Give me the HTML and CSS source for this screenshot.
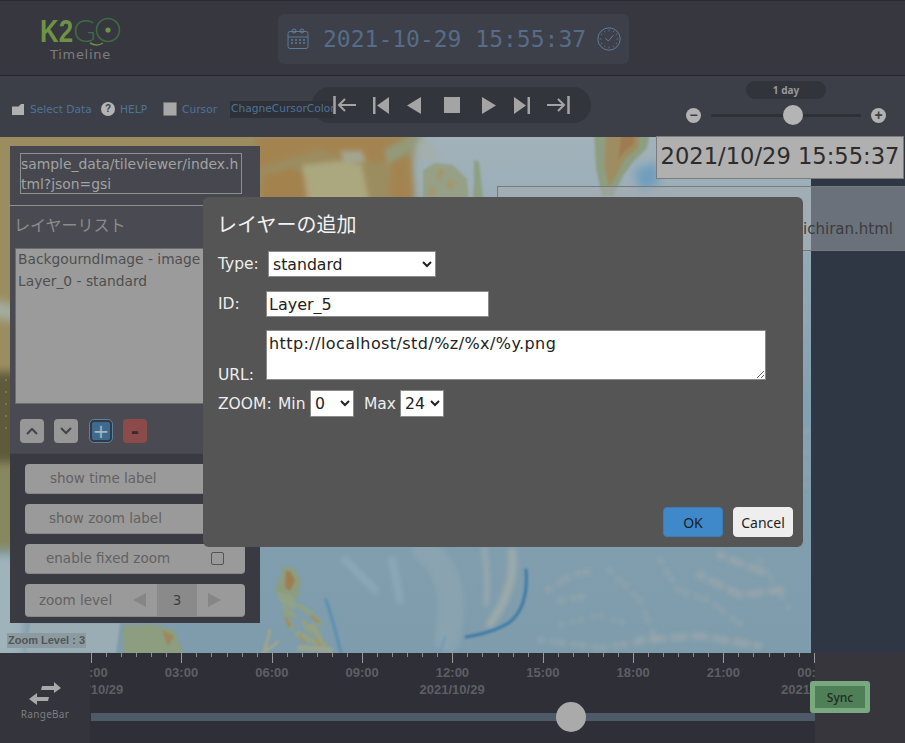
FILE: index.html
```html
<!DOCTYPE html>
<html lang="ja">
<head>
<meta charset="utf-8">
<title>K2GO Timeline</title>
<link rel="stylesheet" href="styles.css">
</head>
<body>
<header class="header">
  <div class="logo">
    <svg class="logo-svg" width="100" height="30" viewBox="0 0 100 30">
      <text class="logo-k2" x="0" y="23" textLength="33" lengthAdjust="spacingAndGlyphs">K2</text>
      <text class="logo-go" x="33" y="23" textLength="23" lengthAdjust="spacingAndGlyphs">G</text>
      <circle cx="68" cy="11" r="11.5" fill="none" stroke="#3f6b45" stroke-width="1.500"/>
      <circle cx="68" cy="11" r="2.600" fill="#6d9345"/>
      <path d="M50 24q7 4 13 0" fill="none" stroke="#6d9345" stroke-width="1.500"/>
    </svg>
    <div class="logo-sub">Timeline</div>
  </div>
  <div class="clock">
    <svg width="22" height="22" viewBox="0 0 22 22" fill="none" stroke="#5f7b9a" stroke-width="1">
      <rect x="1" y="3.500" width="20" height="17" rx="2"/>
      <path d="M1 9h20"/>
      <circle cx="7" cy="3" r="2"/><circle cx="15" cy="3" r="2"/>
      <path d="M4 12h2M8 12h2M12 12h2M16 12h2M4 15h2M8 15h2M12 15h2M16 15h2" stroke-width="1.400"/>
    </svg>
    <span class="clock-text">2021-10-29 15:55:37</span>
    <svg width="24" height="24" viewBox="0 0 24 24" fill="none" stroke="#5f7b9a">
      <circle cx="12" cy="12" r="11.200"/>
      <path d="M12 2.500v2M12 19.500v2M2.500 12h2M19.500 12h2M7 3.800l.8 1.300M17 3.800l-.8 1.300M7 20.200l.8-1.300M17 20.200l-.8-1.300M3.800 7l1.300.8M3.800 17l1.300-.8M20.200 7l-1.300.8M20.200 17l-1.300-.8" stroke-width=".8"/>
      <path d="M8.500 11.500l3 2.500 5-6" stroke-width="1"/>
    </svg>
  </div>
</header>

<nav class="toolbar">
  <div class="player">
    <svg width="23" height="18" viewBox="0 0 23 18" fill="none" stroke="#a4a4a4" stroke-width="2"><path d="M1.500 0v18" stroke-width="2.500"/><path d="M23 9H6M12 3L6 9l6 6"/></svg>
    <svg width="16" height="17" viewBox="0 0 16 17" fill="#a4a4a4"><rect width="2.500" height="17"/><path d="M16 0v17L4 8.500z"/></svg>
    <svg class="pi-prev" width="14" height="17" viewBox="0 0 14 17" fill="#a4a4a4"><path d="M14 0v17L0 8.500z"/></svg>
    <svg class="pi-stop" width="16" height="16" viewBox="0 0 16 16" fill="#a4a4a4"><rect width="16" height="16"/></svg>
    <svg class="pi-play" width="14" height="17" viewBox="0 0 14 17" fill="#a4a4a4"><path d="M0 0v17l14-8.500z"/></svg>
    <svg class="pi-next" width="16" height="17" viewBox="0 0 16 17" fill="#a4a4a4"><rect x="13.500" width="2.500" height="17"/><path d="M0 0v17l12-8.500z"/></svg>
    <svg width="23" height="18" viewBox="0 0 23 18" fill="none" stroke="#a4a4a4" stroke-width="2"><path d="M21.500 0v18" stroke-width="2.500"/><path d="M0 9h17M11 3l6 6-6 6"/></svg>
  </div>
  <div class="tools">
    <svg class="tool-icon" width="12" height="11" viewBox="0 0 12 11"><path d="M0 2.500h6.500L9 0h3v11H0z" fill="#b0b0b0"/></svg>
    <span class="tool-label tool-select">Select Data</span>
    <span class="help">?</span>
    <span class="tool-label tool-help">HELP</span>
    <span class="tool-check"></span>
    <span class="tool-label tool-cursor">Cursor</span>
    <span class="tool-color">ChagneCursorColor</span>
  </div>
  <div class="range">
    <div class="range-label">1 day</div>
    <div class="range-row">
      <span class="range-btn">−</span>
      <span class="range-track"><span class="range-thumb"></span></span>
      <span class="range-btn">+</span>
    </div>
  </div>
</nav>

<main class="main">
  <div class="map">
    <svg class="map-svg" width="811" height="516" viewBox="0 137 811 516" preserveAspectRatio="none">
      <defs>
        <linearGradient id="sea" x1="0" y1="0" x2="0" y2="1">
          <stop offset="0" stop-color="#a2b2ba"/>
          <stop offset=".5" stop-color="#84a1b1"/>
          <stop offset="1" stop-color="#7e9cac"/>
        </linearGradient>
        <filter id="b1" x="-20%" y="-20%" width="140%" height="140%" color-interpolation-filters="sRGB"><feGaussianBlur stdDeviation="1.200"/></filter>
        <filter id="b2" x="-20%" y="-20%" width="140%" height="140%" color-interpolation-filters="sRGB"><feGaussianBlur stdDeviation="2.500"/></filter>
        <filter id="b5" x="-20%" y="-20%" width="140%" height="140%" color-interpolation-filters="sRGB"><feGaussianBlur stdDeviation="5"/></filter>
      </defs>
      <rect x="0" y="137" width="811" height="516" fill="url(#sea)"/>

      <!-- west landmass, mostly behind the panel -->
      <g filter="url(#b5)">
        <path d="M-20 120H420L412 165 415 210 380 440 200 560 90 510 20 530-20 560z" fill="#9c8d60"/>
        <path d="M-20 296L26 308 18 322-20 316z" fill="#a2ad9f"/>
        <path d="M-20 372H24V462H-20z" fill="#5e5a3b"/>
        <path d="M-20 462H24V550H-20z" fill="#87885f"/>
        <path d="M-20 556H24V670H-20z" fill="#9fb3ba"/>
      </g>
      <g filter="url(#b2)" fill-opacity=".85">
        <path d="M255 137h165l-16 14-24 12-30-2-30-12-40 12-25 10z" fill="#a4834f"/>
        <path d="M262 176l30-8 18 10 2 25h-50z" fill="#a4804b"/>
        <path d="M302 165l36-4 24 4 8 40h-62z" fill="#aeab84"/>
        <path d="M340 151l22 0 4 11-22 1z" fill="#a3ab9c"/>
        <path d="M392 162l18-6 4 49h-26z" fill="#a4834f"/>
        <path d="M384 150l30-16 10 6-20 14-16 10z" fill="#919f80"/>
        <path d="M416 140h14l10 20-18 2z" fill="#a4aea9"/>
      </g>
      <!-- islands and peninsula along the top -->
      <g filter="url(#b1)" fill-opacity=".85">
        <path d="M423 170l12-7 18 2 14 14 2 26h-46z" fill="#949e7c"/>
        <path d="M438 168l6 2-2 10-6-2zM448 178l8 4-4 8-6-3zM430 186l6 2-2 8-6-1z" fill="#a5976c"/>
        <path d="M474 160l5 2 5 45-12 1 2-24z" fill="#8b9d78"/>
        <path d="M594 130h56l-3 18-14 14-10 14-10 20h-11l-6-28z" fill="#8b9a76"/>
        <path d="M606 130h34l-2 18-14 12-9 18-6 10-4-20z" fill="#a28b5d"/>
        <path d="M622 130h13l-1 14-10 8-6 8z" fill="#a07a4c"/>
      </g>
      <path d="M634 170l22-8 4 20-18 12z" fill="#6f9dbe" filter="url(#b5)"/>

      <!-- sea floor relief -->
      <g filter="url(#b2)" fill="none" stroke-linecap="round" stroke-opacity=".7">
        <path d="M425 550c26 20 30 50 22 90" stroke="#94a9b3" stroke-width="26" stroke-opacity=".5"/>
        <path d="M484 548q5 30 2 56" stroke="#a2afb1" stroke-width="5"/>
        <path d="M512 552q4 36-22 72" stroke="#a9b0aa" stroke-width="8"/>
        <path d="M392 560l8 40M345 560l30 30" stroke="#8facbb" stroke-width="8"/>
      </g>
      <g filter="url(#b2)" fill="none" stroke="#a5acab" stroke-linecap="round" stroke-dasharray="2 11 1 7" stroke-opacity=".55">
        <path d="M548 590l22-14 24-6M560 600l30-4M540 640l60 8 40-6" stroke-width="6"/>
        <path d="M610 570l30 30 16 40M660 560l18 30 30 10 40 30" stroke-width="5"/>
        <path d="M700 575l40 20 50-6M720 555l50 20M640 640l60-4 60 10" stroke-width="8"/>
        <path d="M760 560l30 50M560 625l40-10 30 10" stroke-width="4"/>
        <path d="M804 300v40M806 430v60" stroke-width="4"/>
      </g>
      <path d="M6 380v60M14 400v40" fill="none" stroke="#bcb99c" stroke-width="1.500" stroke-linecap="round" stroke-dasharray="0 12" stroke-opacity=".7"/>

      <!-- Philippines -->
      <g filter="url(#b1)" fill-opacity=".85">
        <path d="M284 566l10 2 7 12-2 14-6 8-10-2-8-10z" fill="#8e9e77"/>
        <path d="M286 571l5 1 4 9-5 10-5-4z" fill="#a2784a"/>
        <path d="M278 592l14 4 6 10-6 4-12-8z" fill="#93a384"/>
      </g>
      <g filter="url(#b1)" fill="none" stroke-linecap="round" stroke-opacity=".8">
        <path d="M284 608l10 8M300 606l12 8 8 10M286 616l6 12M304 622l6 10" stroke="#93a279" stroke-width="5"/>
        <path d="M286 618l4 8M312 616l6 6" stroke="#a48858" stroke-width="3"/>
        <path d="M298 634l12 6 14 4M312 626l8 12" stroke="#9ba37a" stroke-width="6"/>
        <path d="M300 636l4 6M316 640l4 6" stroke="#a5925e" stroke-width="3"/>
        <path d="M278 642l-16 12M270 630l-6 22" stroke="#a6a885" stroke-width="3"/>
        <path d="M300 648l30 2" stroke="#9fa688" stroke-width="6"/>
      </g>
      <!-- coast south-west -->
      <g filter="url(#b1)" fill-opacity=".85">
        <path d="M30 623h90l-4 30H26z" fill="#a0b0b5"/>
        <path d="M122 626l30-2 22 6 10 24-60 0z" fill="#8e9e78"/>
        <path d="M162 630l12 6-6 10z" fill="#a48354"/>
      </g>
      <!-- trenches -->
      <g fill="none" stroke-linecap="round" filter="url(#b1)">
        <path d="M526 570c2 26-4 42-16 52-12 8-26 12-44 15" stroke="#3f7ba5" stroke-width="3"/>
        <path d="M326 600c6 16 10 34 15 53" stroke="#5a90b3" stroke-width="3"/>
        <path d="M445 637l-5 16" stroke="#6b9cbc" stroke-width="2"/>
      </g>
    </svg>
    <div class="zoom-label">Zoom Level : 3</div>
  </div>
  <aside class="side"></aside>

  <div class="url-frame"><span class="url-frame-text">ichiran.html</span></div>
  <div class="time-label">2021/10/29 15:55:37</div>

  <section class="panel">
    <div class="panel-top">
      <div class="panel-url">sample_data/tileviewer/index.html?json=gsi</div>
    </div>
    <div class="panel-mid">
      <h2 class="panel-title">レイヤーリスト</h2>
      <div class="layer-list">
        <div class="layer-item">BackgourndImage - image</div>
        <div class="layer-item">Layer_0 - standard</div>
      </div>
      <div class="layer-btns">
        <span class="lb lb-gray"><svg width="12" height="8" viewBox="0 0 12 8" fill="none" stroke="#444" stroke-width="2"><path d="M1 7l5-5 5 5"/></svg></span>
        <span class="lb lb-gray"><svg width="12" height="8" viewBox="0 0 12 8" fill="none" stroke="#444" stroke-width="2"><path d="M1 1l5 5 5-5"/></svg></span>
        <span class="lb lb-blue">+</span>
        <span class="lb lb-red">-</span>
      </div>
    </div>
    <div class="panel-bottom">
      <div class="opt opt-a">show time label</div>
      <div class="opt opt-b">show zoom label</div>
      <div class="opt opt-c">enable fixed zoom<span class="opt-check"></span></div>
      <div class="opt opt-d">
        <span class="zl-text">zoom level</span>
        <svg width="13" height="14" viewBox="0 0 13 14" fill="#868686"><path d="M13 0v14L0 7z"/></svg>
        <span class="zl-val">3</span>
        <svg width="13" height="14" viewBox="0 0 13 14" fill="#868686"><path d="M0 0v14l13-7z"/></svg>
      </div>
    </div>
  </section>

  <section class="dialog">
    <h2 class="dlg-title">レイヤーの追加</h2>
    <div class="dlg-row dlg-type">
      <label class="dlg-label lab-type">Type:</label>
      <select class="dlg-select sel-type"><option>standard</option></select>
    </div>
    <div class="dlg-row dlg-id">
      <label class="dlg-label lab-id">ID:</label>
      <input class="dlg-input" type="text" value="Layer_5">
    </div>
    <div class="dlg-row dlg-url">
      <label class="dlg-label lab-url">URL:</label>
      <textarea class="dlg-area">http://localhost/std/%z/%x/%y.png</textarea>
    </div>
    <div class="dlg-row dlg-zoom">
      <label class="dlg-label lab-zoom">ZOOM:</label>
      <span class="dlg-label lab-min">Min</span>
      <select class="dlg-select sel-min"><option>0</option></select>
      <span class="dlg-label lab-max">Max</span>
      <select class="dlg-select sel-max"><option>24</option></select>
    </div>
    <div class="dlg-actions">
      <button class="btn btn-ok">OK</button>
      <button class="btn btn-cancel">Cancel</button>
    </div>
  </section>
</main>

<footer class="timeline">
  <div class="tl-left">
    <svg width="32" height="24" viewBox="0 0 32 24" fill="#a8a8a8"><path d="M13 4h12V0l7 6-7 5V8H12zM20 15H8v-4l-8 6 8 6v-4h11z"/></svg>
    <span class="tl-left-text">RangeBar</span>
  </div>
  <div class="tl-center">
    <div class="ticks"></div>
    <div class="hours">
      <span class="hour">00:00</span><span class="hour">03:00</span><span class="hour">06:00</span><span class="hour">09:00</span><span class="hour">12:00</span><span class="hour">15:00</span><span class="hour">18:00</span><span class="hour">21:00</span><span class="hour">00:00</span>
    </div>
    <div class="dates">
      <span class="date">2021/10/29</span><span class="date">2021/10/29</span><span class="date">2021/10/30</span>
    </div>
    <div class="slider"><span class="slider-thumb"></span></div>
  </div>
  <div class="tl-right"></div>
  <button class="sync">Sync</button>
</footer>
</body>
</html>
```
FILE: styles.css
```css
* { box-sizing: border-box; }
html, body { margin: 0; padding: 0; }
body {
  width: 905px; height: 743px; overflow: hidden; position: relative;
  display: flex; flex-direction: column;
  font-family: "DejaVu Sans", "Noto Sans CJK JP", sans-serif;
  background: #2f3644;
}

/* header */
.header {
  height: 76px; flex: none; display: flex; align-items: flex-start;
  background: #37383f; border-top: 1px solid #2a2b30; border-bottom: 1px solid #26272b;
}
.logo { width: 278px; flex: none; padding: 18px 0 0 40px; position: relative; }
.logo-svg { display: block; overflow: visible; }
.logo-k2 { font: bold 32px "Liberation Sans", sans-serif; fill: #6d9345; }
.logo-go { font: 300 32px Lato, sans-serif; fill: #3f6b45; }
.logo-sub {
  position: absolute; left: 50px; top: 45px;
  font-size: 13px; line-height: 18px; color: #7d7d7d; letter-spacing: .7px;
}
.clock {
  margin-top: 13px; width: 351px; height: 50px; border-radius: 6px; background: #3d4049;
  display: flex; align-items: center; padding-left: 9px; gap: 14px;
}
.clock-text {
  font: 23px "DejaVu Sans Mono", monospace; color: #566c88; width: 260px; white-space: nowrap;
}

/* toolbar */
.toolbar {
  height: 61px; flex: none; position: relative; background: #3c3f48;
}
.tools {
  position: absolute; left: 12px; top: 24px; height: 18px;
  display: flex; align-items: center; font-size: 10.67px; white-space: nowrap;
}
.tool-label { color: #4d7397; }
.tool-select { margin-left: 6px; width: 61px; }
.help {
  margin-left: 10px; width: 14px; height: 14px; border-radius: 50%; background: #b4b4b4; color: #3c3f48;
  font: bold 10px/14px "Liberation Sans", sans-serif; text-align: center; flex: none;
}
.tool-help { margin-left: 5px; width: 28px; }
.tool-check { margin-left: 15px; width: 14px; height: 14px; background: #a8a8a8; border: 1px solid #777; border-radius: 1px; flex: none; }
.tool-cursor { margin-left: 5px; width: 35px; }
.tool-color {
  margin-left: 13px; width: 103px; height: 17px; line-height: 16px; background: #2f3138; color: #4d7397;
  overflow: hidden; padding-left: 1px;
}
.player {
  position: absolute; left: 312px; top: 11px; width: 279px; height: 36px; border-radius: 18px; background: #33353d;
  display: flex; align-items: center; gap: 17px; padding-left: 21px;
}
.pi-prev { margin-left: 1px; }
.pi-stop { margin-left: 6px; }
.pi-play { margin-left: 5px; }
.pi-next { margin-left: 1px; }
.range { position: absolute; left: 686px; top: 5px; width: 200px; }
.range-label {
  margin-left: 60px; width: 80px; height: 18px; border-radius: 9px; background: #32343b;
  color: #999; font: bold 10px/18px "Noto Sans", sans-serif; text-align: center;
}
.range-row { display: flex; align-items: center; gap: 10px; margin-top: 6px; height: 20px; }
.range-btn {
  width: 15px; height: 15px; border-radius: 50%; background: #b2b2b2; color: #3c3f48; flex: none;
  font: bold 14px/14px "Liberation Sans", sans-serif; text-align: center;
}
.range-track { position: relative; width: 150px; height: 3px; background: #2f3138; border-radius: 2px; }
.range-thumb {
  position: absolute; left: 72px; top: -9px; width: 20px; height: 20px; border-radius: 50%; background: #b4b4b4;
}

/* main */
.main { flex: none; height: 516px; display: flex; position: relative; }
.map { width: 811px; flex: none; position: relative; overflow: hidden; }
.map-svg { display: block; }
.zoom-label {
  position: absolute; left: 7px; top: 496px; height: 15px; padding: 0 1px;
  font: bold 11px/15px "Liberation Sans", sans-serif; color: #555; background: #8c9ba1;
}
.side { flex: 1; background: #2f3644; }
.url-frame {
  position: absolute; left: 497px; top: 49px; right: 0; height: 65px;
  border: 1px solid #767a7f; border-right: 0; background: rgba(168,171,175,.5);
  display: flex; align-items: center; justify-content: flex-end; padding: 21px 12px 0 0;
  font-size: 15px; color: #3a3c40;
}
.time-label {
  position: absolute; left: 656px; top: -1px; width: 248px; height: 43px;
  background: #b0b0b0; border: 1px solid #7c7c7c; color: #2c2c2c;
  font-size: 22.6px; line-height: 39px; text-align: center; white-space: nowrap;
}

/* panel */
.panel {
  position: absolute; left: 10px; top: 9px; width: 250px; height: 477px; background: #393a42;
  display: flex; flex-direction: column;
}
.panel-top { height: 60px; padding: 7px 18px 0 10px; background: #47484f; border-bottom: 1px solid #8e8e8e; flex: none; }
.panel-url {
  width: 222px; height: 41px; border: 1px solid #8f8f8f; color: #a2a2a2; font-size: 13.9px; line-height: 20px;
  word-break: break-all; overflow: hidden;
}
.panel-mid { height: 248px; background: #4a4b52; padding: 0 15px 0 5px; flex: none; border-bottom: 1px solid #44454b; }
.panel-title { margin: 9px 0 0 -1px; font-size: 16px; line-height: 22px; font-weight: 400; color: #8b8b8b; }
.layer-list { margin-top: 11px; width: 230px; height: 156px; background: #9b9b9b; border: 1px solid #6d6d6d; padding: 0 2px; color: #4f4f4f; font-size: 13.8px; }
.layer-item { line-height: 21.6px; white-space: nowrap; }
.layer-btns { display: flex; gap: 10px; margin: 15px 0 0 5px; }
.lb {
  width: 24px; height: 24px; border-radius: 4px; display: flex; align-items: center; justify-content: center;
  font-size: 20px; line-height: 1; flex: none;
}
.lb-gray { background: #979797; }
.lb-blue { background: #3e6a8e; color: #a6b4c2; border: 2px solid #313b48; outline: 1px solid #5f7f9c; width: 22px; height: 22px; margin: 1px 1px 1px 2px; }
.lb-red { background: #8c4a4a; color: #3a2a2a; font-weight: bold; }
.panel-bottom { flex: 1; padding: 10px 15px 0; display: flex; flex-direction: column; gap: 10px; }
.opt {
  height: 30px; width: 220px; background: #9a9a9a; border-radius: 4px; color: #626262; font-size: 13.5px; line-height: 28px;
  display: flex; align-items: center; flex: none; border-bottom: 1px solid #888; white-space: nowrap; padding-bottom: 2px;
}
.opt-a { padding-left: 25px; }
.opt-b { padding-left: 24px; }
.opt-c { padding-left: 21px; position: relative; }
.opt-check { position: absolute; left: 186px; top: 8px; width: 13px; height: 13px; border: 1px solid #555; border-radius: 2px; }
.opt-d { height: 33px; padding-left: 14px; padding-bottom: 0; }
.zl-text { width: 94px; flex: none; }
.zl-val { width: 40px; height: 32px; margin: 0 11px; background: #8a8a8a; color: #3e3e3e; text-align: center; line-height: 32px; flex: none; }

/* dialog */
.dialog {
  position: absolute; left: 203px; top: 60px; width: 600px; height: 350px; border-radius: 6px; background: #555;
  padding: 14px 10px 10px 15px; color: #eee; font-size: 15.5px;
}
.dlg-title { margin: 0 0 0 -1px; font-size: 20px; line-height: 28px; font-weight: 400; color: #f2f2f2; }
.dlg-row { display: flex; align-items: center; }
.dlg-label { line-height: 20px; flex: none; }
.dlg-type { margin-top: 12px; height: 26px; }
.lab-type { width: 50px; }
.dlg-id { margin-top: 14px; height: 26px; }
.lab-id { width: 48px; }
.dlg-url { margin-top: 13px; height: 50px; align-items: flex-end; }
.lab-url { width: 48px; margin-bottom: -5px; }
.dlg-zoom { margin-top: 10px; height: 27px; }
.lab-zoom { width: 60px; }
.lab-min { width: 32px; }
.lab-max { margin-left: 10px; width: 36px; }
.dlg-select {
  height: 27px; border: 1px solid #8a8a8a; background: #fff; color: #222; font: 15.7px "DejaVu Sans", sans-serif; border-radius: 0; padding: 0;
}
.sel-type { width: 168px; height: 26px; }
.sel-min { width: 44px; }
.sel-max { width: 44px; }
.dlg-input {
  width: 223px; height: 26px; border: 1px solid #8a8a8a; background: #fff; color: #222; padding: 0 2px; font: 16px "DejaVu Sans", sans-serif; outline: 0;
}
.dlg-area {
  width: 500px; height: 50px; border: 1px solid #8a8a8a; background: #fff; color: #222; padding: 1px 2px 0; margin: 0;
  font: 16px/24px "DejaVu Sans", sans-serif; letter-spacing: .42px; outline: 0; display: block;
}
.dlg-actions { position: absolute; right: 10px; bottom: 10px; display: flex; gap: 10px; }
.btn { width: 60px; height: 30px; border-radius: 4px; font: 14px "Noto Sans", sans-serif; padding: 0; color: #1a1f26; }
.btn-ok { background: #3f88c9; border: 1px solid #3a7db8; }
.btn-cancel { background: #eee; border: 1px solid #eee; }

/* timeline */
.timeline { flex: 1; position: relative; display: flex; background: #2e2f37; }
.tl-left {
  width: 90px; flex: none; background: #33343c;
  display: flex; flex-direction: column; align-items: center; padding-top: 29px; gap: 1px;
}
.tl-left-text { font: 10px/14px "Noto Sans", sans-serif; color: #7d7d7d; letter-spacing: .3px; }
.tl-center { width: 725px; flex: none; position: relative; overflow: hidden; }
.ticks {
  height: 10px; margin-left: 1px;
  background-image:
    repeating-linear-gradient(90deg, #9a9a9a 0 1px, transparent 1px 90.34px),
    repeating-linear-gradient(90deg, #8e8e8e 0 1px, transparent 1px 15.056px);
  background-size: 100% 10px, 100% 4px;
  background-repeat: no-repeat;
}
.hours { display: flex; margin-left: -44px; margin-top: 2px; width: 820px; }
.hour { width: 90.34px; flex: none; text-align: center; font: bold 13px/16px "Liberation Sans", sans-serif; color: #5e5f64; }
.dates { display: flex; margin-left: -180px; margin-top: 1px; }
.date { width: 361.4px; flex: none; text-align: center; font: bold 13px/16px "Liberation Sans", sans-serif; color: #5e5f64; }
.slider { position: absolute; left: 1px; right: 0; top: 60px; height: 8px; background: #4e5a68; }
.slider-thumb { position: absolute; left: 465px; top: -11px; width: 30px; height: 30px; border-radius: 50%; background: #aaa; }
.tl-right { flex: 1; background: #36363c; }
.sync {
  position: absolute; left: 810px; top: 28px; width: 60px; height: 32px; padding: 0;
  background: #4f7f56; border: 5px solid #7aa97f; border-radius: 3px; color: #1f2a22;
  font: 500 12px "Noto Sans", sans-serif;
}
```
